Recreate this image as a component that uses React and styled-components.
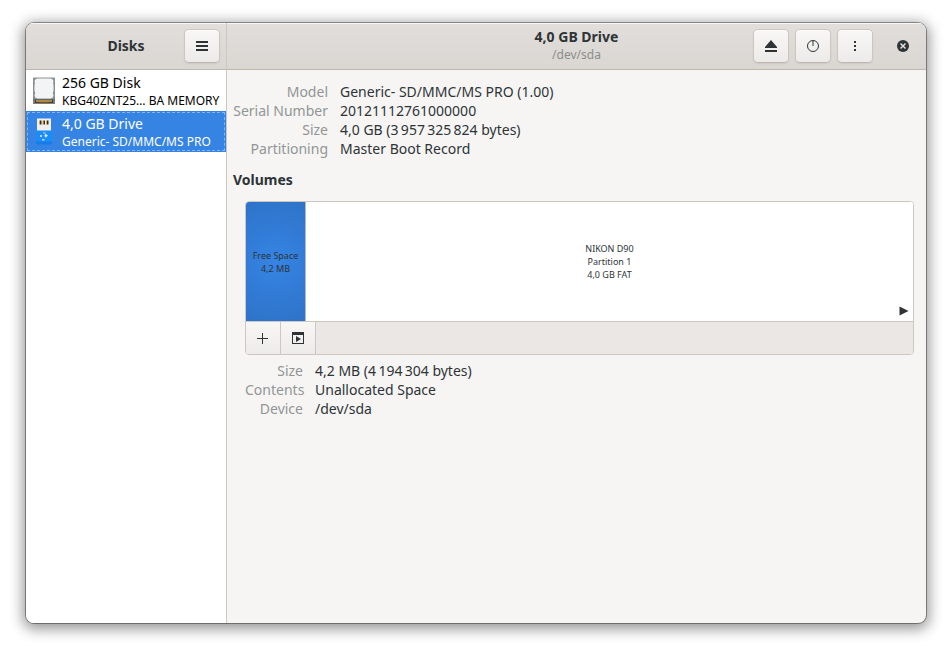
import React, { useState } from "react";
import styled, { createGlobalStyle, css } from "styled-components";

const GlobalStyle = createGlobalStyle`
  * {
    box-sizing: border-box;
  }
  body {
    margin: 0;
    background: #ffffff;
    color: #2e3436;
    font-family: "Noto Sans", "Open Sans", sans-serif;
    font-size: 14px;
    line-height: 19px;
  }
  button {
    font: inherit;
    color: inherit;
    padding: 0;
  }
`;

const Desktop = styled.div`
  display: flex;
  min-height: 100vh;
  padding: 23px 26px 29px;
`;

const Window = styled.div`
  display: grid;
  flex: 1;
  min-width: 0;
  grid-template-columns: 201px minmax(0, 1fr);
  grid-template-rows: 47px 1fr;
  overflow: hidden;
  border-radius: 8px;
  background: #f6f5f4;
  box-shadow: 0 0 0 1px rgba(0, 0, 0, 0.36), 0 3px 14px 3px rgba(0, 0, 0, 0.42);
`;

const headerBar = css`
  display: grid;
  grid-template-columns: 1fr auto 1fr;
  align-items: center;
  padding: 0 6px;
  border-bottom: 1px solid #bfb8b1;
  background: linear-gradient(to top, #dad6d2, #e1dedb);
  box-shadow: inset 0 1px #f9f8f8;
`;

const SideHeader = styled.header`
  ${headerBar}
  border-right: 1px solid #cdc7c2;
`;

const MainHeader = styled.header`
  ${headerBar}
`;

const TitleBlock = styled.div`
  grid-column: 2;
  padding-bottom: 2px;
  text-align: center;
`;

const Title = styled.h1`
  margin: 0;
  font-size: 14px;
  line-height: 19px;
  font-weight: 700;
`;

const Subtitle = styled.p`
  margin: 0;
  color: #8b8d8c;
  font-size: 12px;
  line-height: 17px;
`;

const HeaderButtons = styled.div`
  grid-column: 3;
  display: flex;
  align-items: center;
  justify-content: flex-end;
  gap: 6px;
`;

const IconButton = styled.button`
  display: flex;
  align-items: center;
  justify-content: center;
  width: 36px;
  height: 34px;
  border: 1px solid #cdc7c2;
  border-bottom-color: #bfb8b1;
  border-radius: 5px;
  background: linear-gradient(to top, #edebe9, #f8f7f6);
  box-shadow: inset 0 1px #ffffff, 0 1px 2px rgba(0, 0, 0, 0.07);
`;

const CloseButton = styled.button`
  display: flex;
  align-items: center;
  justify-content: center;
  width: 24px;
  height: 34px;
  margin: 0 5px 0 12px;
  border: none;
  background: none;
`;

const Sidebar = styled.nav`
  border-right: 1px solid #cdc7c2;
  background: #ffffff;
`;

const DiskList = styled.ul`
  margin: 0;
  padding: 0;
  list-style: none;
`;

const DiskRow = styled.button`
  display: flex;
  align-items: center;
  gap: 6px;
  width: 100%;
  height: 41px;
  padding: 0 3px 0 6px;
  border: none;
  text-align: left;
  white-space: nowrap;
  color: ${({ $selected }) => ($selected ? "#ffffff" : "#000000")};
  background: ${({ $selected }) => ($selected ? "#3584e4" : "transparent")};
  outline: ${({ $selected }) => ($selected ? "1px dashed #85b4ee" : "none")};
  outline-offset: -2px;
`;

const DiskText = styled.span`
  display: flex;
  flex-direction: column;
`;

const DiskName = styled.span`
  line-height: 19px;
`;

const DiskModel = styled.span`
  font-size: 12px;
  line-height: 17px;
`;

const Content = styled.main`
  padding: 12px 12px 12px 6px;
`;

const Details = styled.dl`
  display: grid;
  grid-template-columns: ${({ $labelWidth }) => $labelWidth} 1fr;
  column-gap: 12px;
  margin: 0;
`;

const Label = styled.dt`
  color: #929595;
  text-align: right;
  white-space: nowrap;
`;

const Value = styled.dd`
  margin: 0;
`;

const SectionTitle = styled.h2`
  margin: 12px 0;
  font-size: 14px;
  line-height: 19px;
  font-weight: 700;
`;

const Volumes = styled.section`
  display: flex;
  flex-direction: column;
  gap: 6px;
  padding-left: 12px;
`;

const VolumeFrame = styled.div`
  overflow: hidden;
  border: 1px solid #cdc7c2;
  border-radius: 4px;
`;

const VolumeGrid = styled.div`
  display: flex;
  height: 119px;
  background: #ffffff;
`;

const Volume = styled.button`
  position: relative;
  flex: ${({ $small }) => ($small ? "0 0 60px" : "1")};
  border: none;
  border-right: ${({ $small }) => ($small ? "1px solid #b9b9b8" : "none")};
  font-size: 9px;
  line-height: 13px;
  white-space: pre-line;
  background: ${({ $selected }) =>
    $selected ? "radial-gradient(circle, #3584e4, #2e73c8)" : "#ffffff"};
`;

const MountedMark = styled.svg`
  position: absolute;
  right: 4px;
  bottom: 5px;
`;

const Toolbar = styled.div`
  display: flex;
  height: 33px;
  border-top: 1px solid #cdc7c2;
  background: #ebe7e4;
`;

const ToolButton = styled.button`
  display: flex;
  align-items: center;
  justify-content: center;
  width: 35px;
  border: none;
  border-right: 1px solid #cdc7c2;
  background: linear-gradient(to top, #edebe9, #f8f7f6);
`;

const Icon = ({ children }) => (
  <svg width="16" height="16" viewBox="0 0 16 16" fill="#2e3436" aria-hidden="true">
    {children}
  </svg>
);

const HardDiskIcon = () => (
  <svg width="24" height="28" viewBox="0 0 24 28" aria-hidden="true">
    <rect x="1" y="0.5" width="22" height="26" rx="1" fill="#8d9091" />
    <rect x="1" y="22.5" width="22" height="4" fill="#3f403d" />
    <path
      d="M6 1.5H18Q21 1.5 21.5 4.5Q20.5 6 21.5 8V14Q20 16 21.5 18Q21 21.5 18 21.5H6Q3 21.5 2.5 18Q4 16 2.5 14V8Q3.5 6 2.5 4.5Q3 1.5 6 1.5Z"
      fill="#f3f4f5"
    />
    <path d="M4 24H20" stroke="#d3a344" strokeWidth="1.5" />
    <path d="M7 26H17" stroke="#8f7338" />
    <path d="M1 22.5h2v4H1zM21 22.5h2v4h-2z" fill="#777a7a" />
  </svg>
);

const UsbDriveIcon = () => (
  <svg width="24" height="28" viewBox="0 0 24 28" aria-hidden="true">
    <path d="M5 0.5H19V13H5Z" fill="#f1efec" />
    <path d="M7 2.5h1v4H7zM10.5 2.5h1v4h-1zM14 2.5h1v4h-1z" fill="#e3a529" />
    <path d="M8 2.5h1.5v4H8zM11.5 2.5H13v4h-1.5zM15 2.5h1.5v4H15z" fill="#2e2a2b" />
    <path d="M4 12.5H20V24.5Q20 26.5 18 26.5H6Q4 26.5 4 24.5Z" fill="#1a8dfa" />
    <path d="M4 23.5H20V24.5Q20 26.5 18 26.5H6Q4 26.5 4 24.5Z" fill="#187ce6" />
    <path d="M8 17h2v2H8zM11 14.5h2.5v1H11zM10 21h2.5v1.5H10z" fill="#b5dafd" />
    <path d="M13 15.5L16 17.5L13.5 20V18.5H12.5V17H13Z" fill="#d3e9ff" />
  </svg>
);

const disks = [
  {
    name: "256 GB Disk",
    model: "KBG40ZNT25… BA MEMORY",
    icon: <HardDiskIcon />,
  },
  {
    name: "4,0 GB Drive",
    model: "Generic- SD/MMC/MS PRO",
    icon: <UsbDriveIcon />,
  },
];

const driveDetails = [
  ["Model", "Generic- SD/MMC/MS PRO (1.00)"],
  ["Serial Number", "20121112761000000"],
  ["Size", "4,0 GB (3\u2009957\u2009325\u2009824 bytes)"],
  ["Partitioning", "Master Boot Record"],
];

const volumeDetails = [
  ["Size", "4,2 MB (4\u2009194\u2009304 bytes)"],
  ["Contents", "Unallocated Space"],
  ["Device", "/dev/sda"],
];

const DetailList = ({ items, labelWidth }) => (
  <Details $labelWidth={labelWidth}>
    {items.map(([label, value]) => (
      <React.Fragment key={label}>
        <Label>{label}</Label>
        <Value>{value}</Value>
      </React.Fragment>
    ))}
  </Details>
);

const App = () => {
  const [selectedDisk, setSelectedDisk] = useState(1);
  const [selectedVolume, setSelectedVolume] = useState(0);

  return (
    <>
      <GlobalStyle />
      <Desktop>
        <Window>
          <SideHeader>
            <TitleBlock>
              <Title as="h2">Disks</Title>
            </TitleBlock>
            <HeaderButtons>
              <IconButton aria-label="Menu">
                <Icon>
                  <path d="M2 3h12v2H2zM2 7h12v2H2zM2 11h12v2H2z" />
                </Icon>
              </IconButton>
            </HeaderButtons>
          </SideHeader>

          <MainHeader>
            <TitleBlock>
              <Title>4,0 GB Drive</Title>
              <Subtitle>/dev/sda</Subtitle>
            </TitleBlock>
            <HeaderButtons>
              <IconButton aria-label="Eject">
                <Icon>
                  <path d="M8 2L14 9V10H2V9ZM2 12h12v2H2z" />
                </Icon>
              </IconButton>
              <IconButton aria-label="Power off">
                <Icon>
                  <circle cx="8" cy="8" r="5.5" fill="none" stroke="#2e3436" />
                  <path d="M7.5 3h1v5h-1z" />
                </Icon>
              </IconButton>
              <IconButton aria-label="Drive options">
                <Icon>
                  <path d="M7 3h2v2H7zM7 7h2v2H7zM7 11h2v2H7z" />
                </Icon>
              </IconButton>
              <CloseButton aria-label="Close">
                <Icon>
                  <circle cx="8" cy="8" r="6" />
                  <path d="M5.5 5.5L10.5 10.5M10.5 5.5L5.5 10.5" stroke="#e1dedb" strokeWidth="1.5" />
                </Icon>
              </CloseButton>
            </HeaderButtons>
          </MainHeader>

          <Sidebar>
            <DiskList>
              {disks.map((disk, index) => (
                <li key={disk.name}>
                  <DiskRow
                    $selected={index === selectedDisk}
                    onClick={() => setSelectedDisk(index)}
                  >
                    {disk.icon}
                    <DiskText>
                      <DiskName>{disk.name}</DiskName>
                      <DiskModel>{disk.model}</DiskModel>
                    </DiskText>
                  </DiskRow>
                </li>
              ))}
            </DiskList>
          </Sidebar>

          <Content>
            <DetailList items={driveDetails} labelWidth="95px" />
            <SectionTitle>Volumes</SectionTitle>
            <Volumes>
              <VolumeFrame>
                <VolumeGrid>
                  <Volume
                    $small
                    $selected={selectedVolume === 0}
                    onClick={() => setSelectedVolume(0)}
                  >
                    {"Free Space\n4,2 MB"}
                  </Volume>
                  <Volume
                    $selected={selectedVolume === 1}
                    onClick={() => setSelectedVolume(1)}
                  >
                    {"NIKON D90\nPartition 1\n4,0 GB FAT"}
                    <MountedMark width="10" height="10" viewBox="0 0 10 10" fill="#2e3436">
                      <path d="M0.5 0.5L9.5 5L0.5 9.5Z" />
                    </MountedMark>
                  </Volume>
                </VolumeGrid>
                <Toolbar>
                  <ToolButton aria-label="Create partition">
                    <Icon>
                      <path d="M7 3h1v5h5v1H8v5H7V9H2V8h5z" />
                    </Icon>
                  </ToolButton>
                  <ToolButton aria-label="Additional partition options">
                    <Icon>
                      <path fillRule="evenodd" d="M2 2H14V14H2ZM3 5V13H13V5Z" />
                      <path d="M6 6L11 9L6 12Z" />
                    </Icon>
                  </ToolButton>
                </Toolbar>
              </VolumeFrame>
              <DetailList items={volumeDetails} labelWidth="58px" />
            </Volumes>
          </Content>
        </Window>
      </Desktop>
    </>
  );
};

export default App;
